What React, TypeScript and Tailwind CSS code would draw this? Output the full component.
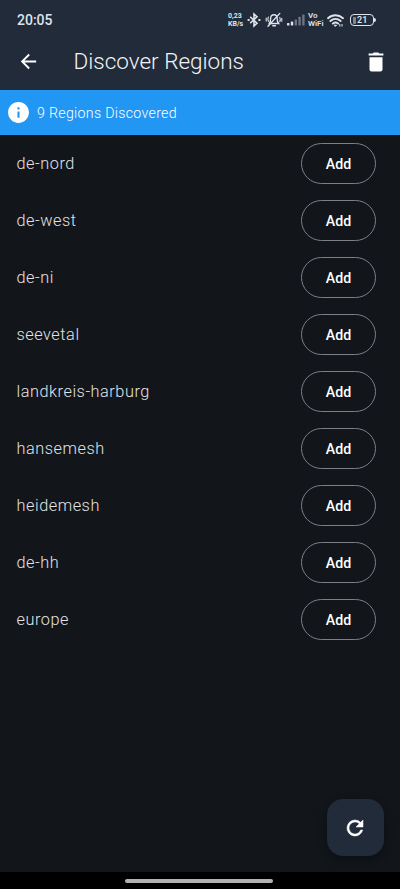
import { MdArrowBack, MdInfo } from "react-icons/md";

const REGIONS = [
  "de-nord",
  "de-west",
  "de-ni",
  "seevetal",
  "landkreis-harburg",
  "hansemesh",
  "heidemesh",
  "de-hh",
  "europe",
];

function BluetoothIcon() {
  return (
    <svg width="16" height="16" viewBox="0 0 16 16" fill="none" stroke="currentColor" strokeWidth="1.6">
      <path d="M4.2 4.8 11 11.2 8 14V2l3 2.8-6.8 6.4" />
      <path d="M1.6 8h2M12.4 8h2" strokeWidth="1.8" />
    </svg>
  );
}

function MutedBellIcon() {
  return (
    <svg width="18" height="16" viewBox="0 0 18 16" fill="none" stroke="currentColor" strokeWidth="1.4" strokeLinecap="round">
      <path d="M4.4 11.5h9.2c-1.2-1.2-1.4-2.4-1.4-4.8 0-2.4-1.2-4-3.2-4s-3.4 1.6-3.4 4c0 2.4 0 3.6-1.2 4.8Z" />
      <path d="M7.8 13.8h2.6M14.8 1.4 3 14.2" />
      <path d="M3.4 5c-.8 1.4-.8 3.2 0 4.6M1.2 6v3M14.8 5.4c.6 1.4.6 3 0 4.4M16.8 6.2v3" strokeWidth="1.1" />
    </svg>
  );
}

function SignalIcon() {
  return (
    <svg width="18" height="12" viewBox="0 0 18 12" fill="currentColor">
      <rect x="0" y="9" width="2.4" height="2.6" rx=".5" />
      <rect x="3.8" y="7.6" width="2.4" height="4" rx=".5" />
      <g opacity=".4">
        <rect x="7.6" y="5.4" width="2.4" height="6.2" rx=".5" />
        <rect x="11.4" y="2.8" width="2.4" height="8.8" rx=".5" />
        <rect x="15.2" y=".4" width="2.4" height="11.2" rx=".5" />
      </g>
    </svg>
  );
}

function WifiIcon() {
  return (
    <svg width="17" height="13" viewBox="0 0 17 13" fill="none" stroke="currentColor" strokeWidth="1.9" strokeLinecap="round">
      <path d="M1 4.2c4.4-4 10.6-4 15 0M3.4 7c3-2.7 7.2-2.7 10.2 0M5.8 9.6c1.6-1.4 3.8-1.4 5.4 0" />
      <path d="M7.5 11.2h2l-1 1Z" fill="currentColor" strokeWidth="1" />
      <path d="M12.8 10.4v1.8M15 10.4v1.8" strokeWidth="1" />
    </svg>
  );
}

function BatteryIcon() {
  return (
    <div className="flex items-center">
      <div className="flex h-[12px] w-[24px] items-center rounded-[4px] border-[1.5px] border-[#dfe3ea] pl-[2px]">
        <span className="h-[7px] w-[3px] rounded-[1px] bg-[#dfe3ea]/50" />
        <span className="ml-[1px] text-[9px] leading-none font-semibold">21</span>
      </div>
      <span className="h-[4px] w-[2px] rounded-r-sm bg-[#dfe3ea]" />
    </div>
  );
}

function TrashIcon() {
  return (
    <svg width="24" height="24" viewBox="0 0 24 24" fill="currentColor">
      <path d="M5.5 7.2h13v12.3a2 2 0 0 1-2 2h-9a2 2 0 0 1-2-2ZM4.6 3.6h4.1l1-1h4.6l1 1h4.1v2H4.6Z" />
    </svg>
  );
}

function RefreshIcon() {
  return (
    <svg width="24" height="24" viewBox="0 0 24 24" fill="currentColor">
      <path
        d="M17.65 6.35A7.96 7.96 0 0 0 12 4a8 8 0 1 0 7.73 10h-2.08A6 6 0 1 1 12 6c1.66 0 3.14.69 4.22 1.78L13 11h7V4l-2.35 2.35Z"
        stroke="currentColor"
        strokeWidth=".5"
      />
    </svg>
  );
}

function StatusBar() {
  return (
    <div className="flex h-[38px] items-center pt-[2px] pr-[24px] pl-[17px] text-[#dfe3ea]">
      <span className="text-[14px] leading-none font-medium">20:05</span>
      <div className="ml-auto flex items-center">
        <div className="w-[16px] text-[7px] leading-[8px] font-bold">
          <div>0,23</div>
          <div>KB/s</div>
        </div>
        <div className="ml-[2px]">
          <BluetoothIcon />
        </div>
        <div className="ml-[3px]">
          <MutedBellIcon />
        </div>
        <div className="ml-[4px]">
          <SignalIcon />
        </div>
        <div className="ml-[3px] w-[17px] text-[8px] leading-[8px] font-semibold">
          <div>Vo</div>
          <div>WiFi</div>
        </div>
        <div className="mr-[6px] ml-[2px]">
          <WifiIcon />
        </div>
        <BatteryIcon />
      </div>
    </div>
  );
}

function AppBar() {
  return (
    <div className="flex h-[52px] items-center pr-[12px] pb-[5px] pl-[17px] text-white">
      <MdArrowBack className="size-[23px]" />
      <h1 className="ml-[33.5px] pb-[1px] text-[22.5px] leading-[22px] font-light text-[#f3f4f6]">
        Discover Regions
      </h1>
      <div className="ml-auto">
        <TrashIcon />
      </div>
    </div>
  );
}

function RegionRow({ name }: { name: string }) {
  return (
    <li className="flex h-[57px] items-center justify-between pr-[24px] pl-[16.5px]">
      <span className="pt-[2px] text-[16.3px] leading-none font-light tracking-[0.54px] text-[#e3e3e6]">{name}</span>
      <button className="h-[41px] w-[75px] rounded-full border border-[#7c8087] pt-[2px] text-[14.2px] font-medium text-white">
        Add
      </button>
    </li>
  );
}

export default function App() {
  return (
    <div className="flex h-[889px] w-[400px] flex-col overflow-hidden bg-[#12161b] font-[Roboto,sans-serif]">
      <header className="h-[90px] shrink-0 bg-[#222b3a]">
        <StatusBar />
        <AppBar />
      </header>
      <div className="flex h-[45px] shrink-0 items-center bg-[#2196f3] pl-[6px] text-white">
        <MdInfo className="size-[25px]" />
        <span className="ml-[6px] pt-[2px] text-[14.2px] font-light tracking-[0.3px]">9 Regions Discovered</span>
      </div>
      <main className="flex flex-1 flex-col">
        <ul>
          {REGIONS.map((name) => (
            <RegionRow key={name} name={name} />
          ))}
        </ul>
        <button className="mt-auto mr-[16px] mb-[16px] flex size-[57px] items-center justify-center self-end rounded-[16px] bg-[#222b3a] pr-[1px] text-white shadow-[0_3px_8px_rgba(0,0,0,0.4)]">
          <RefreshIcon />
        </button>
      </main>
      <footer className="flex h-[17px] shrink-0 items-center justify-center bg-black pr-[3px]">
        <div className="h-[4px] w-[148px] rounded-full bg-[#b3b3b3]" />
      </footer>
    </div>
  );
}
